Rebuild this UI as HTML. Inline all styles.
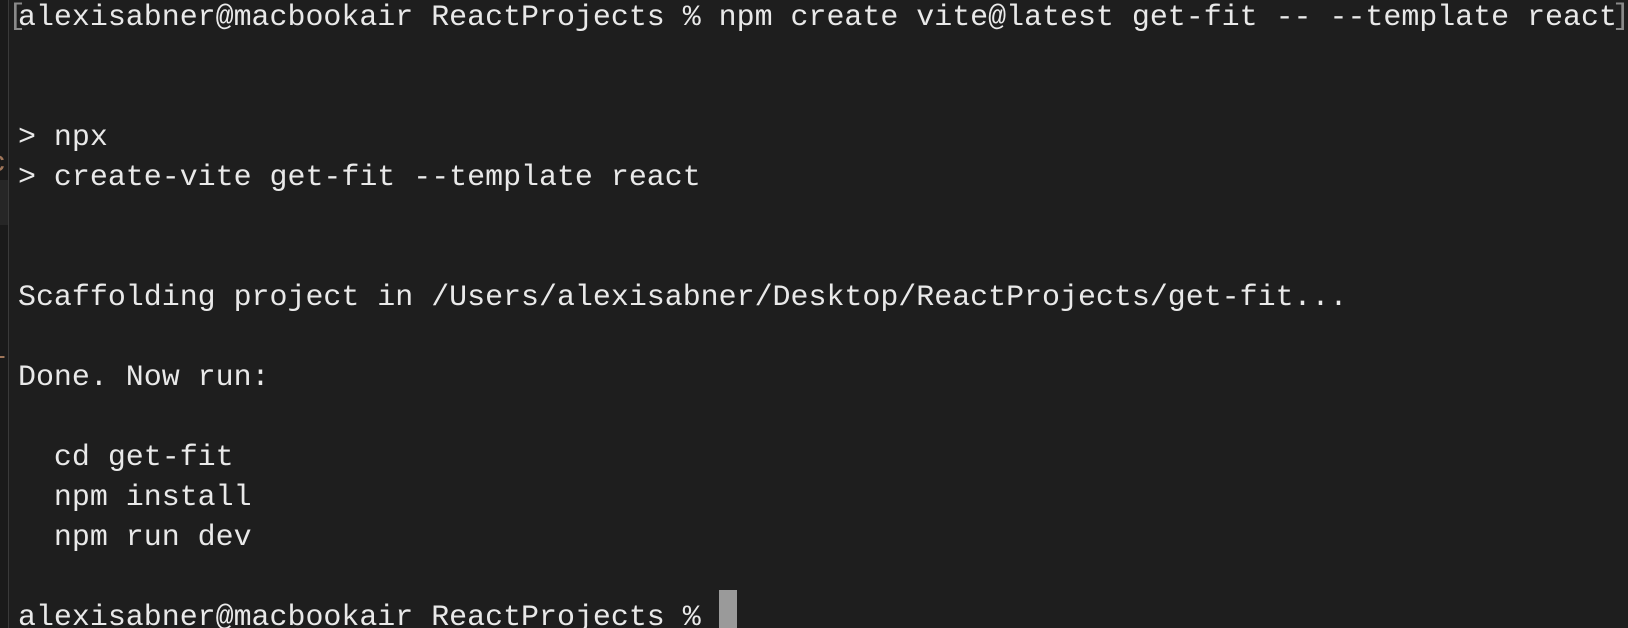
<!DOCTYPE html>
<html><head><meta charset="utf-8"><style>
html,body{margin:0;padding:0;background:#1e1e1e;width:1628px;height:628px;overflow:hidden;position:relative}
.l{position:absolute;left:18px;font-family:"Liberation Mono",monospace;font-size:29.95px;line-height:40px;color:#e9e9e9;white-space:pre}
.strip{position:absolute;left:0;top:0;width:8px;height:628px;background:#1a1a1a;border-right:1px solid #3a3a3a}
.band{position:absolute;left:0;top:180px;width:8px;height:45px;background:#262626}
.g{position:absolute;font-family:"Liberation Mono",monospace;font-size:30px;color:#a0765a;line-height:40px}
.br{position:absolute;font-family:"Liberation Mono",monospace;font-size:30px;color:#8a8a8a;line-height:40px}
.cur{position:absolute;left:719px;top:590px;width:18px;height:38px;background:#9a9a9a}
</style></head><body>
<div class="strip"></div><div class="band"></div>
<div class="g" style="left:-12px;top:144px">c</div>
<div class="g" style="left:-12px;top:331px">i</div>
<div class="br" style="left:8px;top:-3px">[</div>
<div class="br" style="left:1612px;top:-3px">]</div>
<div class="l" style="top:-3px">alexisabner@macbookair ReactProjects % npm create vite@latest get-fit -- --template react</div>
<div class="l" style="top:117px">&gt; npx</div>
<div class="l" style="top:157px">&gt; create-vite get-fit --template react</div>
<div class="l" style="top:277px">Scaffolding project in /Users/alexisabner/Desktop/ReactProjects/get-fit...</div>
<div class="l" style="top:357px">Done. Now run:</div>
<div class="l" style="top:437px">  cd get-fit</div>
<div class="l" style="top:477px">  npm install</div>
<div class="l" style="top:517px">  npm run dev</div>
<div class="l" style="top:597px">alexisabner@macbookair ReactProjects % </div>
<div class="cur"></div>
</body></html>
